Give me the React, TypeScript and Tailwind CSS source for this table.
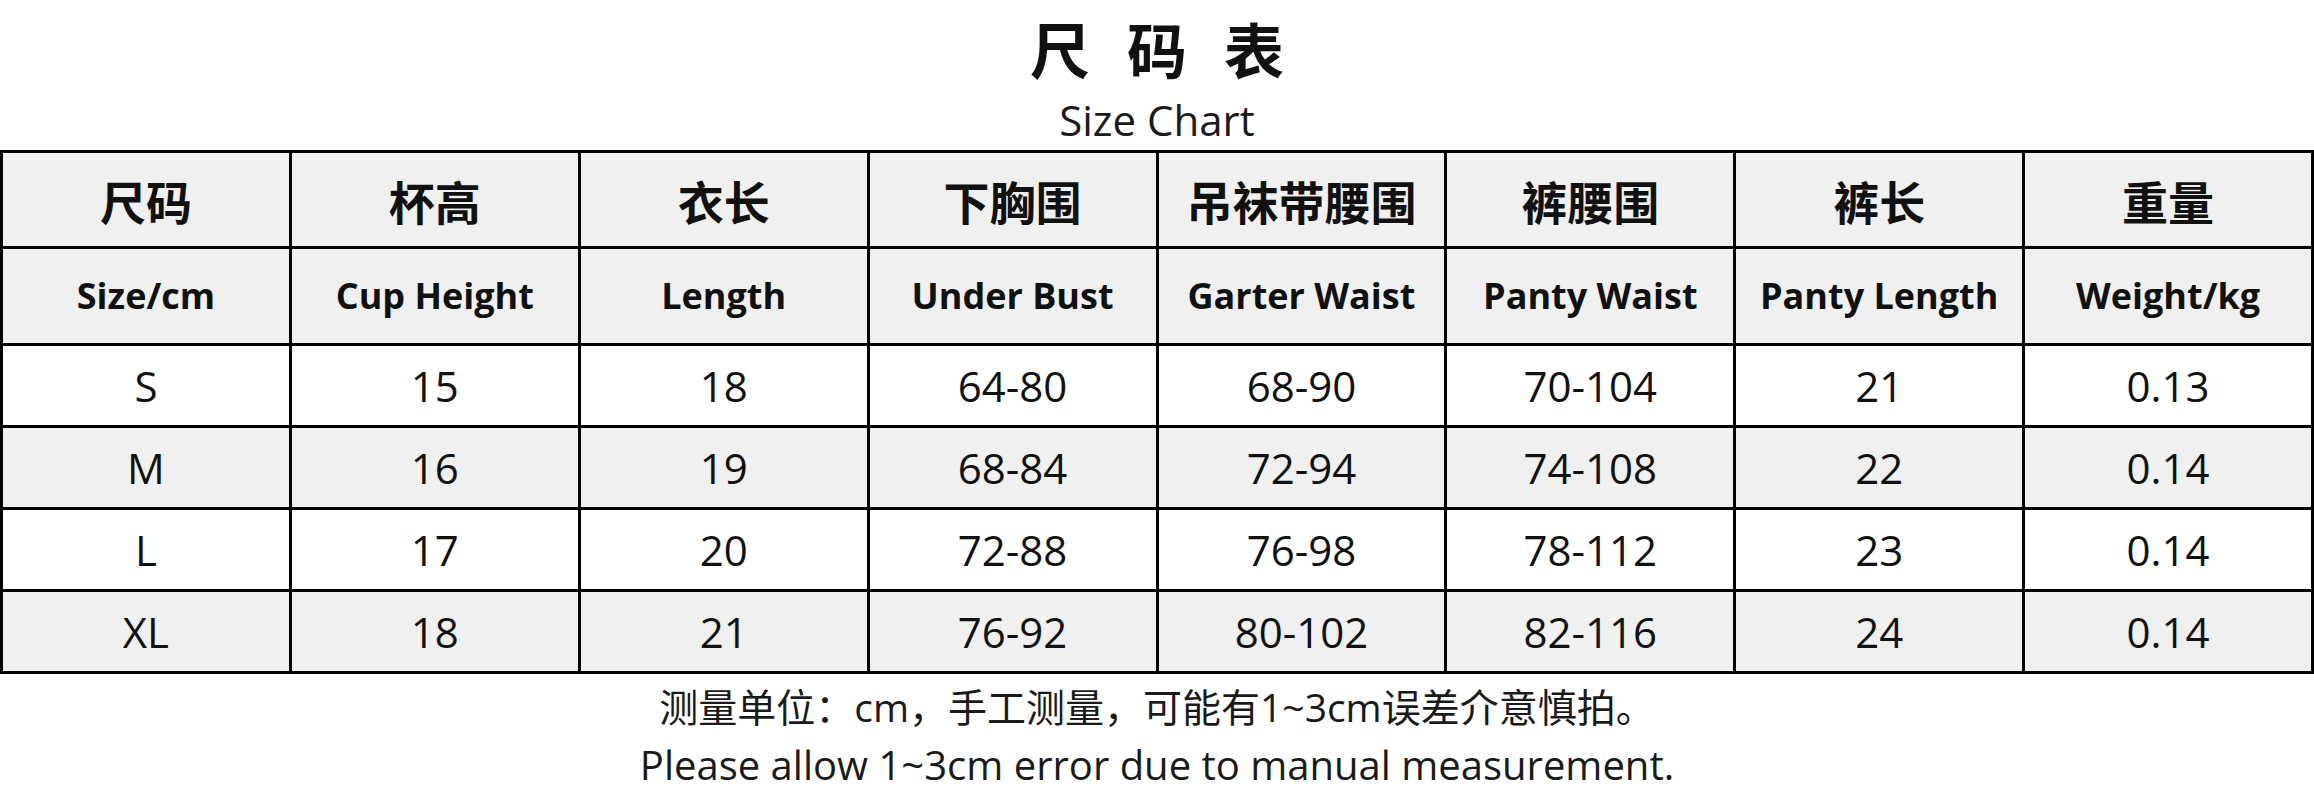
const headersZh = ["尺码", "杯高", "衣长", "下胸围", "吊袜带腰围", "裤腰围", "裤长", "重量"];
const headersEn = ["Size/cm", "Cup Height", "Length", "Under Bust", "Garter Waist", "Panty Waist", "Panty Length", "Weight/kg"];

const rows = [
  ["S", "15", "18", "64-80", "68-90", "70-104", "21", "0.13"],
  ["M", "16", "19", "68-84", "72-94", "74-108", "22", "0.14"],
  ["L", "17", "20", "72-88", "76-98", "78-112", "23", "0.14"],
  ["XL", "18", "21", "76-92", "80-102", "82-116", "24", "0.14"],
];

const latin = "font-['Open_Sans','Noto_Sans_CJK_SC',sans-serif]";
const cjk = "font-['Noto_Sans_CJK_SC','Noto_Sans',sans-serif]";

export default function App() {
  return (
    <div className="w-[2314px] h-[800px] bg-white text-[#111] flex flex-col items-center overflow-hidden">
      {/* 标题 */}
      <div className={`${cjk} flex gap-[37px] pt-[18px] h-[78px] text-[60px] leading-[60px] font-bold`}>
        <span>尺</span>
        <span>码</span>
        <span>表</span>
      </div>
      <div className={`${latin} mt-[18px] text-[42px] leading-[48px] text-[#1a1a1a]`}>Size Chart</div>

      {/* 表格 */}
      <table className="mt-[6px] w-full table-fixed border-collapse border-[3px] border-black text-center">
        <tbody>
          <tr className="h-[96px] bg-[#f0f0f0]">
            {headersZh.map((h) => (
              <td key={h} className={`${cjk} border-[3px] border-black text-[46px] font-bold leading-none`}>
                {h}
              </td>
            ))}
          </tr>
          <tr className="h-[97px] bg-[#f0f0f0]">
            {headersEn.map((h) => (
              <td key={h} className={`${latin} border-[3px] border-black text-[36px] font-bold leading-none`}>
                {h}
              </td>
            ))}
          </tr>
          {rows.map((r, i) => (
            <tr key={r[0]} className={`h-[82px] ${i % 2 === 0 ? "bg-white" : "bg-[#f0f0f0]"}`}>
              {r.map((c, j) => (
                <td key={j} className={`${latin} border-[3px] border-black text-[42px] leading-none`}>
                  {c}
                </td>
              ))}
            </tr>
          ))}
        </tbody>
      </table>

      {/* 说明 */}
      <div className={`${latin} mt-[4px] text-[39px] leading-[58px] text-[#1a1a1a] text-center`}>
        <p>测量单位：cm，手工测量，可能有1~3cm误差介意慎拍。</p>
        <p className="text-[40px]">Please allow 1~3cm error due to manual measurement.</p>
      </div>
    </div>
  );
}
